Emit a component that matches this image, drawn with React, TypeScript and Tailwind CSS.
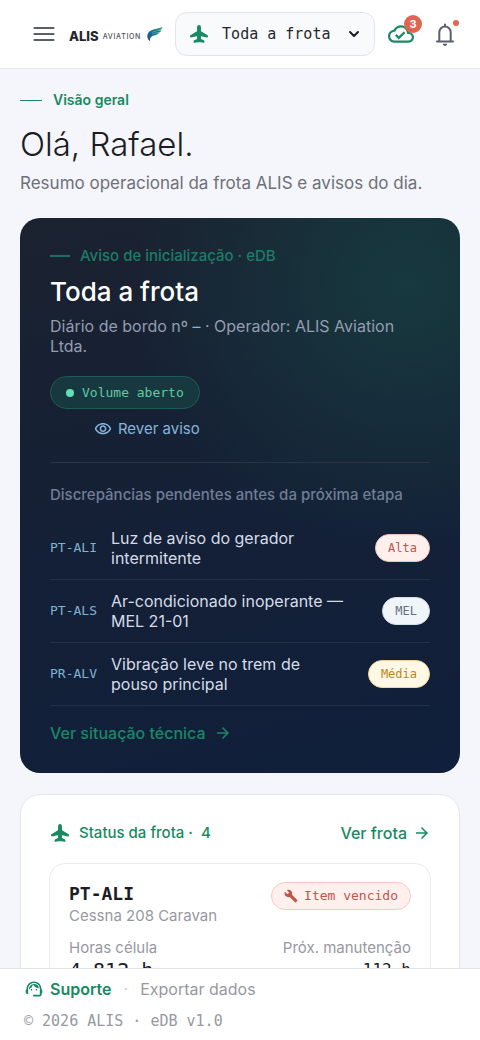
import React from 'react';
import {
  MdArrowForward,
  MdBuild,
  MdOutlineCloudDone,
  MdOutlineVisibility,
  MdSupportAgent,
} from 'react-icons/md';
import { ChevronDown } from 'lucide-react';

type Severity = 'high' | 'mel' | 'medium';

interface Discrepancy {
  tail: string;
  text: string;
  label: string;
  severity: Severity;
}

const DISCREPANCIES: Discrepancy[] = [
  { tail: 'PT-ALI', text: 'Luz de aviso do gerador intermitente', label: 'Alta', severity: 'high' },
  { tail: 'PT-ALS', text: 'Ar-condicionado inoperante — MEL 21-01', label: 'MEL', severity: 'mel' },
  { tail: 'PR-ALV', text: 'Vibração leve no trem de pouso principal', label: 'Média', severity: 'medium' },
];

const SEVERITY_STYLES: Record<Severity, string> = {
  high: 'bg-[#fff0ee] border-[#f3c3bd] text-[#bd5548]',
  mel: 'bg-[#f0f5fa] border-[#d5dfe8] text-[#667080]',
  medium: 'bg-[#fff8e4] border-[#eed694] text-[#b58a24]',
};

const MONO = "font-['DejaVu_Sans_Mono','Liberation_Mono',monospace]";

const PlaneIcon = ({ className }: { className: string }) => (
  <svg viewBox="0 0 24 24" className={className} fill="currentColor" stroke="currentColor" strokeWidth="1.4" strokeLinejoin="round" aria-hidden="true">
    <path d="M12 3c-.9 0-1.4.8-1.4 1.7v4.7L3 14v1.1l7.6-1.6v4.2l-3.8 2.1v1.1L12 20.1l5.2.8v-1.1l-3.8-2.1v-4.2l7.6 1.6V14l-7.6-4.6V4.7C13.4 3.8 12.9 3 12 3Z" />
  </svg>
);

const MenuIcon = () => (
  <svg viewBox="0 0 22 16" className="h-4 w-[22px]" stroke="currentColor" strokeWidth="2.2" strokeLinecap="round" aria-hidden="true">
    <path d="M1.500 2h19M1.500 8h19M1.500 14h19" />
  </svg>
);

const BellIcon = () => (
  <svg viewBox="0 0 24 26" className="h-[26px] w-6" fill="none" stroke="currentColor" strokeWidth="2" strokeLinecap="round" aria-hidden="true">
    <path d="M4 20.500h16M6.300 20v-8.500a5.700 6 0 0 1 11.400 0V20M12 3.500v1.500" />
    <path d="M9.800 22.800h4.400c0 1.300-1 2.200-2.200 2.200s-2.200-.9-2.200-2.200Z" fill="currentColor" stroke="none" />
  </svg>
);

const Logo = () => (
  <a href="#inicio" className="flex shrink-0 items-center pl-px pt-1.5 text-[#25272f]">
    <span className="text-[13px] font-extrabold">ALIS</span>
    <span className="ml-1 pt-px text-[7px] font-medium tracking-widest text-[#4b4f5c]">AVIATION</span>
    <svg viewBox="0 0 48 46" className="mb-1.5 ml-1.5 h-4 w-4" aria-hidden="true">
      <defs>
        <linearGradient id="wing" x1="0" y1="1" x2="1" y2="0">
          <stop offset="0" stopColor="#12539b" />
          <stop offset="0.45" stopColor="#126c8e" />
          <stop offset="1" stopColor="#20a066" />
        </linearGradient>
      </defs>
      <path
        fill="url(#wing)"
        d="M47 1C38 8 14 5 4 19c-6 9-3 20 5 26-1-9 2-14 9-17 8-2 14-3 19-8-4 1-6 1-9 1 7 0 13-3 16-9-4 2-6 2-9 2C40 12 45 8 47 1Z"
      />
      <path d="M14 19c8-6 20-5 28-11M15 24c7-5 14-4 21-6" fill="none" stroke="#fff" strokeWidth="0.8" />
    </svg>
  </a>
);

const Header = () => (
  <header className="flex shrink-0 items-center border-b border-[#e4e5e8] bg-white py-3 pl-5 pr-[13px]">
    <button type="button" aria-label="Abrir menu" className="flex h-11 w-12 shrink-0 items-center justify-center text-[#5b5e6d]">
      <MenuIcon />
    </button>
    <Logo />
    <div className="relative ml-3 flex h-11 min-w-0 flex-1 items-center rounded-xl border border-[#e2e4e6] bg-[#f8fafc]">
      <PlaneIcon className="pointer-events-none absolute left-3 h-[22px] w-[22px] text-[#178a61]" />
      <select
        aria-label="Frota"
        className={`h-full w-full appearance-none rounded-xl bg-transparent pl-[46px] pr-8 text-[15px] font-medium text-[#25272f] ${MONO}`}
      >
        <option>Toda a frota</option>
      </select>
      <ChevronDown className="pointer-events-none absolute right-3 h-4 w-4 text-[#1b1c24]" strokeWidth={3} />
    </div>
    <button type="button" aria-label="Sincronização" className="relative ml-1 flex h-11 w-11 shrink-0 items-center justify-center text-[#178a61]">
      <MdOutlineCloudDone className="h-[26px] w-[26px]" />
      <span className="absolute right-px top-[3px] flex h-[18px] w-[18px] items-center justify-center rounded-full bg-[#df6451] text-[11px] font-bold text-white">
        3
      </span>
    </button>
    <button type="button" aria-label="Notificações" className="relative flex h-11 w-11 shrink-0 items-center justify-center text-[#5b5e6d]">
      <BellIcon />
      <span className="absolute right-2 top-2 h-1.5 w-1.5 rounded-full bg-[#df6451]" />
    </button>
  </header>
);

const NoticeCard = () => (
  <section className="mt-[23px] rounded-[20px] bg-[radial-gradient(circle_at_88%_12%,#17393f_0%,transparent_44%),linear-gradient(165deg,#1b2230_0%,#142036_50%,#101f3b_100%)] px-[30px] pb-7 pt-7">
    <div className="flex items-center gap-2.5 text-[15px] font-medium leading-5 text-[#1c7d66]">
      <span className="h-0.5 w-5 bg-[#1c6e60]" />
      Aviso de inicialização · eDB
    </div>
    <h2 className="mt-2 text-[26px] font-medium leading-9 text-white">Toda a frota</h2>
    <p className="mt-1.5 text-base leading-5 text-[#939daf]">
      Diário de bordo nº <span className="text-[#86b5dc]">–</span> · Operador: ALIS Aviation Ltda.
    </p>

    <div className="mt-5 flex w-fit flex-col items-end">
      <span className={`inline-flex h-[33px] items-center gap-2 rounded-full border border-[#1d5c55] bg-[#18383f] px-[15px] text-[13px] text-[#5dcba6] ${MONO}`}>
        <span className="h-2 w-2 rounded-full bg-[#5fe0b6]" />
        Volume aberto
      </span>
      <button type="button" className="mt-2 flex items-center gap-1.5 text-[15px] leading-6 text-[#86b5dc]">
        <MdOutlineVisibility className="h-[18px] w-[18px]" />
        Rever aviso
      </button>
    </div>

    <div className="mt-[21px] border-t border-[#283548] pt-[22px]">
      <h3 className="text-[15px] font-medium leading-5 text-[#707d95]">Discrepâncias pendentes antes da próxima etapa</h3>
      <ul className="mt-3">
        {DISCREPANCIES.map((d) => (
          <li key={d.tail} className="flex items-center border-b border-[#223045] py-[11px]">
            <span className={`w-[61px] shrink-0 text-[13px] text-[#7fb3d3] ${MONO}`}>{d.tail}</span>
            <span className="min-w-0 flex-1 pr-6 text-base leading-5 text-[#d5dbe7]">{d.text}</span>
            <span
              className={`flex h-7 shrink-0 items-center rounded-full border px-3 text-xs ${SEVERITY_STYLES[d.severity]} ${MONO}`}
            >
              {d.label}
            </span>
          </li>
        ))}
      </ul>
      <a href="#situacao" className="mt-[15px] inline-flex items-center gap-2 text-base font-medium leading-6 text-[#1a8768]">
        Ver situação técnica <MdArrowForward className="h-[18px] w-[18px]" />
      </a>
    </div>
  </section>
);

const FleetCard = () => (
  <section className="mt-[21px] rounded-[20px] border border-[#e4e6e9] bg-white px-7 pb-7 pt-[26px]">
    <div className="flex items-center justify-between leading-6 text-[#178a61]">
      <h2 className="flex items-center gap-2 text-[15px] font-medium">
        <PlaneIcon className="h-[22px] w-[22px]" />
        <span>Status da frota ·</span>
        <span>4</span>
      </h2>
      <a href="#frota" className="flex items-center gap-1.5 text-base font-medium leading-6">
        Ver frota <MdArrowForward className="h-[18px] w-[18px]" />
      </a>
    </div>

    <article className="mt-[18px] rounded-2xl border border-[#e8eaed] px-[19px] py-[18px]">
      <div className="flex items-start justify-between">
        <div>
          <h3 className={`text-lg font-bold leading-6 text-[#1b1c24] ${MONO}`}>PT-ALI</h3>
          <p className="text-[15px] leading-5 text-[#96999f]">Cessna 208 Caravan</p>
        </div>
        <span className={`flex h-7 items-center gap-1.5 rounded-full border border-[#f6c9c4] bg-[#fff0ee] px-3 text-[13px] text-[#bd5548] ${MONO}`}>
          <MdBuild className="h-3.5 w-3.5" />
          Item vencido
        </span>
      </div>
      <dl className="mt-3 flex justify-between">
        <div>
          <dt className="text-[15px] leading-5 text-[#96999f]">Horas célula</dt>
          <dd className={`text-xl leading-6 text-[#1b1c24] ${MONO}`}>4.812 h</dd>
        </div>
        <div className="text-right">
          <dt className="text-[15px] leading-5 text-[#96999f]">Próx. manutenção</dt>
          <dd className={`text-base leading-6 text-[#1b1c24] ${MONO}`}>112 h</dd>
        </div>
      </dl>
    </article>
  </section>
);

const Footer = () => (
  <footer className="shrink-0 border-t border-[#e2e4e6] bg-white px-6 pb-[7px] pt-2 text-[#96999f]">
    <div className="flex items-center gap-3 text-base leading-6">
      <a href="#suporte" className="flex items-center gap-1.5 font-semibold text-[#178a61]">
        <MdSupportAgent className="h-5 w-5" />
        Suporte
      </a>
      <span className="text-[#c8cace]">·</span>
      <a href="#exportar">Exportar dados</a>
    </div>
    <p className={`mt-2 text-[15px] leading-6 ${MONO}`}>© 2026 ALIS · eDB v1.0</p>
  </footer>
);

const App = () => (
  <div className="flex h-screen flex-col bg-[#f4f6fb] font-['Inter',sans-serif]">
    <Header />
    <main className="min-h-0 flex-1 overflow-y-auto px-5 pb-6 pt-[21px] [scrollbar-width:none]">
      <div className="flex items-center gap-[11px] text-sm font-semibold leading-5 text-[#178a61]">
        <span className="h-px w-[22px] bg-[#178a61]" />
        Visão geral
      </div>
      <h1 className="mt-3 text-[33px] font-light leading-11 text-[#1b1c24]">Olá, Rafael.</h1>
      <p className="mt-[5px] text-[17px] leading-6 text-[#6d7078]">Resumo operacional da frota ALIS e avisos do dia.</p>
      <NoticeCard />
      <FleetCard />
    </main>
    <Footer />
  </div>
);

export default App;
